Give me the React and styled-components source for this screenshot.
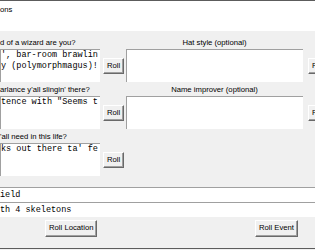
import styled, { createGlobalStyle } from "styled-components";

const GlobalStyle = createGlobalStyle`
  html, body {
    margin: 0;
    padding: 0;
    background: #f0f0f0;
    overflow: hidden;
  }
  body {
    width: 315px;
    height: 250px;
    font-family: "Liberation Sans", Arial, sans-serif;
    font-size: 7.7px;
    color: #000;
  }
`;

const rows = [
  {
    question: "d of a wizard are you?",
    text: "', bar-room brawlin\ny (polymorphmagus)!",
    extra: "Hat style (optional)",
  },
  {
    question: "arlance y'all slingin' there?",
    text: 'tence with "Seems t',
    extra: "Name improver (optional)",
  },
  {
    question: "'all need in this life?",
    text: "ks out there ta' fe",
  },
];

const App = () => {
  return (
    <Window>
      <GlobalStyle />
      <Header>ons</Header>
      <Form>
        {rows.map((r) => (
          <Row key={r.question}>
            <Question>{r.question}</Question>
            {r.extra && <ExtraLabel>{r.extra}</ExtraLabel>}
            <TextBox>{r.text}</TextBox>
            <Button>Roll</Button>
            {r.extra && <TextBox />}
            {r.extra && <Button $far>Roll</Button>}
          </Row>
        ))}
      </Form>
      <Entries>
        <Entry>ield</Entry>
        <Entry>th 4 skeletons</Entry>
      </Entries>
      <Actions>
        <Button $tall>Roll Location</Button>
        <Button $tall>Roll Event</Button>
      </Actions>
      <Bottom />
    </Window>
  );
};

const Window = styled.div`
  width: 315px;
  height: 250px;
  box-sizing: border-box;
  border-top: 1px solid #5c5c5c;
  display: flex;
  flex-direction: column;
  overflow: hidden;
`;

const Header = styled.div`
  height: 30px;
  box-sizing: border-box;
  background: #fff;
  padding-top: 4px;
  line-height: 10px;
  white-space: nowrap;
`;

const Form = styled.div`
  padding-top: 4px;
  display: flex;
  flex-direction: column;
`;

const Row = styled.div`
  display: grid;
  grid-template-columns: 100px 20px 177px 20px;
  grid-template-rows: 14px 33px;
  column-gap: 3px;
`;

const Question = styled.div`
  grid-column: 1;
  grid-row: 1;
  white-space: nowrap;
  line-height: 14px;
  padding-top: 1px;
`;

const ExtraLabel = styled.div`
  grid-column: 3;
  grid-row: 1;
  text-align: center;
  white-space: nowrap;
  line-height: 14px;
  padding-top: 1px;
`;

const TextBox = styled.div`
  grid-row: 2;
  background: #fff;
  box-sizing: border-box;
  border-top: 1px solid #a0a0a0;
  border-left: 1px solid #a0a0a0;
  font-family: "Liberation Mono", "Courier New", monospace;
  font-size: 8.5px;
  line-height: 11px;
  white-space: pre;
  overflow: hidden;
  padding: 0;
`;

const Button = styled.div`
  align-self: center;
  justify-self: start;
  grid-row: 2;
  margin-left: ${(p) => (p.$far ? "2px" : "0")};
  height: ${(p) => (p.$tall ? "17px" : "16px")};
  box-sizing: border-box;
  padding: 0 3px;
  background: #f0f0f0;
  border-top: 1px solid #fff;
  border-left: 1px solid #fff;
  border-right: 1px solid #696969;
  border-bottom: 1px solid #696969;
  box-shadow: inset -1px -1px 0 #a0a0a0;
  line-height: ${(p) => (p.$tall ? "14px" : "13px")};
  white-space: nowrap;
`;

const Entries = styled.div`
  margin-top: 11px;
  display: flex;
  flex-direction: column;
`;

const Entry = styled.div`
  height: 14px;
  box-sizing: content-box;
  background: #fff;
  border-top: 1px solid #a0a0a0;
  font-family: "Liberation Mono", "Courier New", monospace;
  font-size: 8.5px;
  line-height: 14px;
  white-space: pre;
  overflow: hidden;
`;

const Actions = styled.div`
  margin-top: 3px;
  display: flex;
  justify-content: space-between;
  padding: 0 17px 0 45px;
`;

const Bottom = styled.div`
  margin-top: auto;
  height: 1px;
  border-top: 1px solid #5c5c5c;
`;

export default App;
